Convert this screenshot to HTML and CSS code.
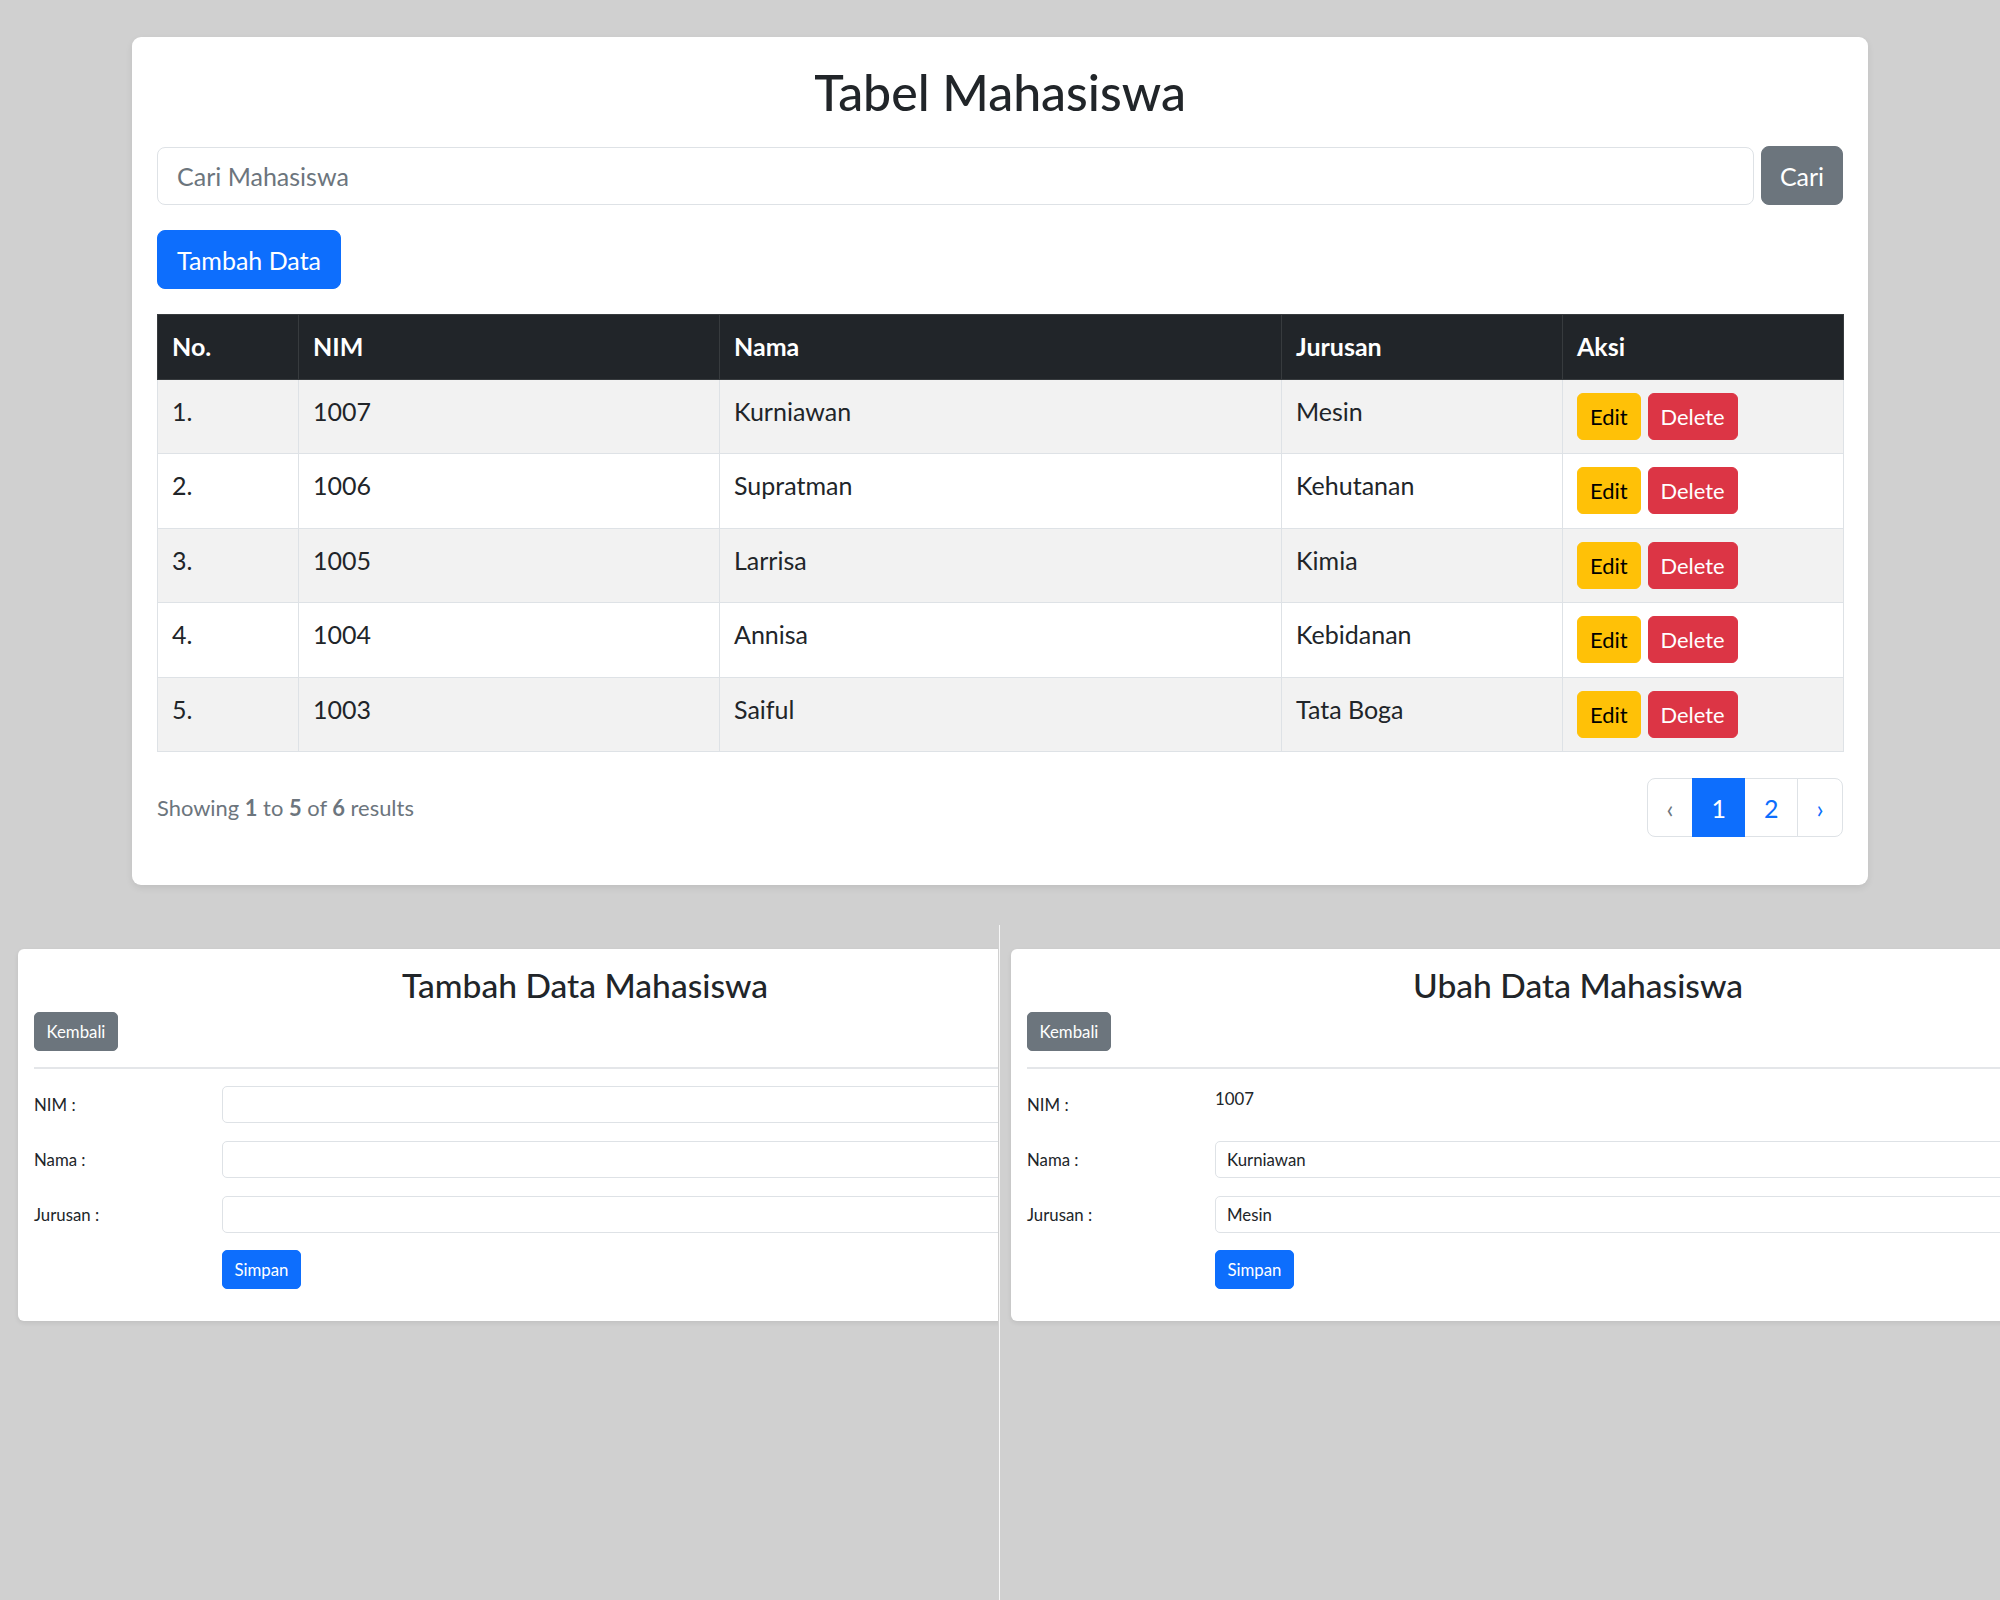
FILE: index.html
```html
<!DOCTYPE html>
<html lang="id">
<head>
<meta charset="utf-8">
<title>Tabel Mahasiswa</title>
<link rel="stylesheet" href="styles.css">
</head>
<body>
<div class="top">
  <div class="main-card">
    <h2 class="main-title">Tabel Mahasiswa</h2>
    <form class="search-row">
      <input class="search-input" type="text" placeholder="Cari Mahasiswa">
      <button class="btn btn-secondary btn-lg" type="button">Cari</button>
    </form>
    <div class="add-row">
      <button class="btn btn-primary btn-lg" type="button">Tambah Data</button>
    </div>
    <table class="data-table">
      <colgroup>
        <col class="c-no"><col class="c-nim"><col class="c-nama"><col class="c-jur"><col class="c-aksi">
      </colgroup>
      <thead>
        <tr><th>No.</th><th>NIM</th><th>Nama</th><th>Jurusan</th><th>Aksi</th></tr>
      </thead>
      <tbody>
        <tr class="odd"><td>1.</td><td>1007</td><td>Kurniawan</td><td>Mesin</td><td><div class="actions"><button class="btn btn-sm btn-warning">Edit</button><button class="btn btn-sm btn-danger">Delete</button></div></td></tr>
        <tr><td>2.</td><td>1006</td><td>Supratman</td><td>Kehutanan</td><td><div class="actions"><button class="btn btn-sm btn-warning">Edit</button><button class="btn btn-sm btn-danger">Delete</button></div></td></tr>
        <tr class="odd"><td>3.</td><td>1005</td><td>Larrisa</td><td>Kimia</td><td><div class="actions"><button class="btn btn-sm btn-warning">Edit</button><button class="btn btn-sm btn-danger">Delete</button></div></td></tr>
        <tr><td>4.</td><td>1004</td><td>Annisa</td><td>Kebidanan</td><td><div class="actions"><button class="btn btn-sm btn-warning">Edit</button><button class="btn btn-sm btn-danger">Delete</button></div></td></tr>
        <tr class="odd"><td>5.</td><td>1003</td><td>Saiful</td><td>Tata Boga</td><td><div class="actions"><button class="btn btn-sm btn-warning">Edit</button><button class="btn btn-sm btn-danger">Delete</button></div></td></tr>
      </tbody>
    </table>
    <div class="pager-row">
      <p class="showing">Showing <span class="semi">1</span> to <span class="semi">5</span> of <span class="semi">6</span> results</p>
      <ul class="pagination">
        <li class="page disabled"><span>&lsaquo;</span></li>
        <li class="page active"><span>1</span></li>
        <li class="page"><span>2</span></li>
        <li class="page"><span>&rsaquo;</span></li>
      </ul>
    </div>
  </div>
</div>

<div class="bottom">
  <div class="panel panel-left">
    <div class="form-card">
      <h3 class="form-title">Tambah Data Mahasiswa</h3>
      <button class="btn btn-secondary btn-xs" type="button">Kembali</button>
      <hr class="rule">
      <div class="form-row"><label class="form-label">NIM :</label><input class="form-input" type="text"></div>
      <div class="form-row"><label class="form-label">Nama :</label><input class="form-input" type="text"></div>
      <div class="form-row"><label class="form-label">Jurusan :</label><input class="form-input" type="text"></div>
      <div class="form-row submit-row"><span class="form-label"></span><button class="btn btn-primary btn-xs" type="button">Simpan</button></div>
    </div>
  </div>
  <div class="divider"></div>
  <div class="panel panel-right">
    <div class="form-card">
      <h3 class="form-title">Ubah Data Mahasiswa</h3>
      <button class="btn btn-secondary btn-xs" type="button">Kembali</button>
      <hr class="rule">
      <div class="form-row"><label class="form-label">NIM :</label><span class="static-value">1007</span></div>
      <div class="form-row"><label class="form-label">Nama :</label><input class="form-input" type="text" value="Kurniawan"></div>
      <div class="form-row"><label class="form-label">Jurusan :</label><input class="form-input" type="text" value="Mesin"></div>
      <div class="form-row submit-row"><span class="form-label"></span><button class="btn btn-primary btn-xs" type="button">Simpan</button></div>
    </div>
  </div>
</div>
</body>
</html>
```

FILE: styles.css
```css
* { box-sizing: border-box; }

html, body {
  margin: 0;
  padding: 0;
}

body {
  width: 2000px;
  min-height: 1600px;
  background: #d0d0d0;
  font-family: Lato, "Segoe UI", "Noto Sans", sans-serif;
  color: #212529;
  overflow: hidden;
}

/* ---------- top card ---------- */
.top {
  padding: 37px 0 0 132px;
}

.main-card {
  width: 1736px;
  background: #fff;
  border-radius: 9px;
  padding: 25px 25px 48px;
  box-shadow: 0 3px 7px rgba(0, 0, 0, 0.08);
}

.main-title {
  margin: 0 0 24px;
  font-size: 50px;
  line-height: 60px;
  font-weight: 500;
  text-align: center;
  color: #212529;
}

.search-row {
  display: flex;
  align-items: center;
  gap: 7px;
  margin: 0 0 25px;
}

.search-input {
  flex: 1;
  height: 58px;
  border: 1px solid #dee2e6;
  border-radius: 8px;
  padding: 0 19px;
  font-family: inherit;
  font-size: 25px;
  color: #212529;
  background: #fff;
  outline: none;
}

.search-input::placeholder {
  color: #6c757d;
}

.btn {
  display: inline-flex;
  align-items: center;
  justify-content: center;
  border: 1px solid transparent;
  font-family: inherit;
  color: #fff;
  cursor: pointer;
  white-space: nowrap;
}

.btn-lg {
  height: 59px;
  padding: 0 19px;
  font-size: 25px;
  border-radius: 8px;
}

.search-row .btn-lg {
  width: 82px;
  padding: 0;
}

.btn-primary { background: #0d6efd; border-color: #0d6efd; }
.btn-secondary { background: #6c757d; border-color: #6c757d; }
.btn-warning { background: #ffc107; border-color: #ffc107; color: #000; }
.btn-danger { background: #dc3545; border-color: #dc3545; }

.add-row {
  margin-bottom: 25px;
}

/* ---------- table ---------- */
.data-table {
  width: 100%;
  border-collapse: collapse;
  table-layout: fixed;
  font-size: 25px;
  line-height: 37.5px;
}

.c-no { width: 141px; }
.c-nim { width: 421px; }
.c-nama { width: 562px; }
.c-jur { width: 281px; }
.c-aksi { width: 281px; }

.data-table th,
.data-table td {
  text-align: left;
  vertical-align: top;
  padding: 13px 14px 13.5px;
  border: 1px solid #dee2e6;
}

.data-table th {
  padding-bottom: 13px;
  background: #212529;
  color: #fff;
  font-weight: 700;
  border-color: #373b3e;
}

.data-table tbody tr { background: #fff; }
.data-table tbody tr.odd { background: #f2f2f2; }

.actions {
  display: flex;
  gap: 7px;
}

.btn-sm {
  height: 47px;
  padding: 0 12px;
  font-size: 21.9px;
  border-radius: 6px;
}

/* ---------- pager ---------- */
.pager-row {
  display: flex;
  justify-content: space-between;
  align-items: center;
  margin-top: 26px;
  height: 59px;
}

.showing {
  margin: 0;
  font-size: 21.9px;
  color: #6c757d;
}

.semi { font-weight: 700; }

.pagination {
  display: flex;
  list-style: none;
  margin: 0;
  padding: 0;
}

.page span {
  display: flex;
  align-items: center;
  justify-content: center;
  height: 59px;
  padding: 0 18.5px;
  font-size: 25px;
  color: #0d6efd;
  background: #fff;
  border: 1px solid #dee2e6;
  margin-left: -1px;
}

.page:first-child span {
  margin-left: 0;
  border-radius: 8px 0 0 8px;
}

.page:last-child span {
  border-radius: 0 8px 8px 0;
}

.page.disabled span { color: #6c757d; }

.page.active span {
  background: #0d6efd;
  border-color: #0d6efd;
  color: #fff;
  position: relative;
}

/* ---------- bottom forms ---------- */
.bottom {
  display: flex;
  margin-top: 40px;
  height: 675px;
}

.panel {
  overflow: hidden;
  padding-top: 24px;
}

.panel-left {
  width: 998px;
  padding-left: 18px;
}

.divider {
  width: 1px;
  margin-left: 1px;
  background: #f7f7f7;
}

.panel-right {
  flex: 1;
  padding-left: 11px;
}

.form-card {
  width: 1134px;
  background: #fff;
  border-radius: 6px;
  padding: 16px 16px 32px;
  box-shadow: 0 2px 5px rgba(0, 0, 0, 0.08);
}

.form-title {
  margin: 0 0 7px;
  font-size: 33.6px;
  line-height: 40px;
  font-weight: 500;
  text-align: center;
  color: #212529;
}

.btn-xs {
  height: 39px;
  padding: 0 11.5px;
  font-size: 16.8px;
  border-radius: 5px;
}

.rule {
  margin: 16px 0 17px;
  border: 0;
  height: 2px;
  background: #e4e6e9;
}

.form-row {
  display: flex;
  align-items: center;
  margin-bottom: 18px;
  min-height: 37px;
}

.form-row.submit-row {
  margin-bottom: 0;
  margin-top: -1px;
}

.form-label {
  width: 188px;
  flex-shrink: 0;
  font-size: 16.8px;
  color: #212529;
}

.form-input {
  flex: 1;
  height: 37px;
  border: 1px solid #dee2e6;
  border-radius: 5px;
  padding: 0 11px;
  font-family: inherit;
  font-size: 16.8px;
  color: #212529;
  background: #fff;
  outline: none;
}

.static-value {
  align-self: flex-start;
  font-size: 16.8px;
  line-height: 26px;
  color: #212529;
}
```
